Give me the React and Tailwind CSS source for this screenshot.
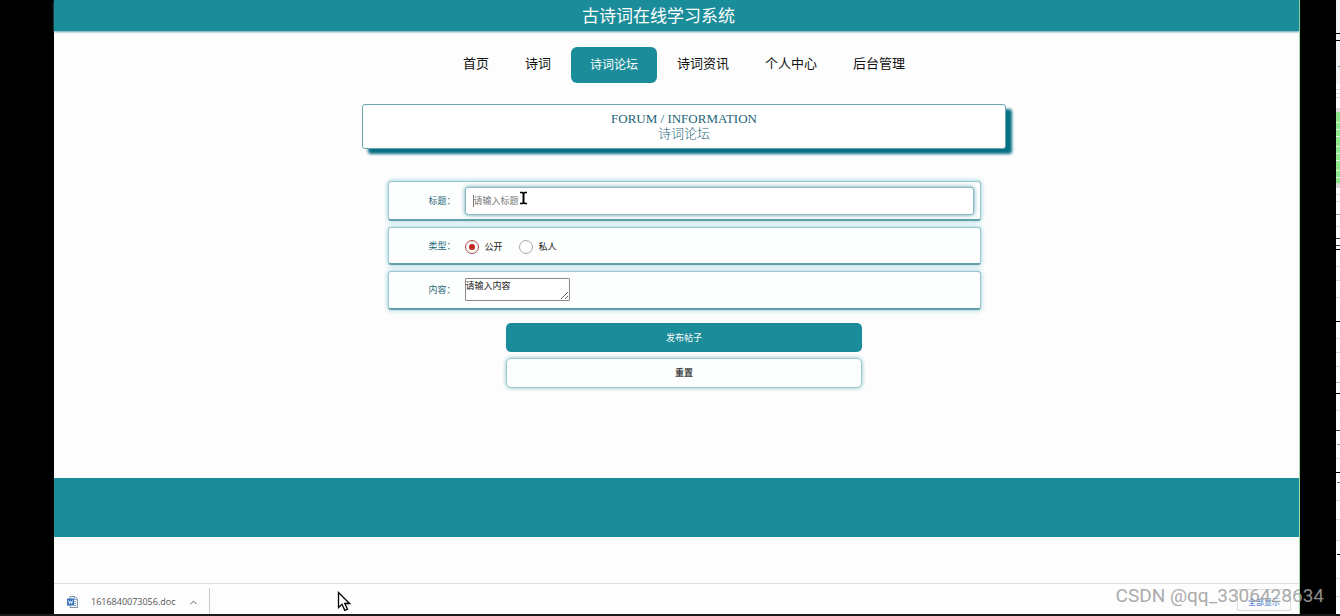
import React, { useState } from 'react'
import { ChevronUp } from 'lucide-react'

const navItems = ['首页', '诗词', '诗词论坛', '诗词资讯', '个人中心', '后台管理']

// [y, left, color] of each mark on the ruler
const rulerMarks = [
  [33, 0, '#000'], [40, 0, '#000'], [66, 2, '#7aa5a0'], [89, 0, '#ddd'], [93, 0, '#ddd'], [97, 0, '#ddd'],
  [194, 0, '#ddd'], [201, 0, '#ddd'], [214, 0, '#aaa'], [226, 0, '#ddd'], [238, 0, '#444'], [245, 0, '#444'],
  [249, 0, '#000'], [266, 0, '#ddd'], [280, 0, '#ddd'], [297, 0, '#ddd'], [321, 0, '#000'], [338, 0, '#ddd'],
  [352, 0, '#ddd'], [366, 0, '#ddd'], [382, 0, '#bbb'], [393, 0, '#000'], [410, 0, '#ddd'], [430, 0, '#444'],
  [444, 1, '#999'], [458, 0, '#ddd'], [472, 0, '#000'], [482, 1, '#777'], [500, 0, '#ddd'], [519, 0, '#ddd'],
  [540, 0, '#ddd'], [554, 1, '#000'], [578, 0, '#ddd'], [596, 0, '#ddd'],
]

function Ruler() {
  return (
    <svg className="w-1 shrink-0 bg-white" aria-hidden="true">
      <rect width="4" height="84" fill="#f1f2f6" />
      <rect y="108" width="4" height="80" fill="#ddd" />
      <rect y="112" width="4" height="71" fill="#90e58f" />
      {[122, 129, 136, 146, 153, 160, 170, 177].map((y) => (
        <rect key={y} y={y} width="4" height="1" fill="#e4f8e2" />
      ))}
      {rulerMarks.map(([y, x, color]) => (
        <rect key={y} x={x} y={y} width={4 - x} height="1" fill={color} />
      ))}
    </svg>
  )
}

function Header() {
  return (
    <header className="flex h-[31px] items-center justify-center bg-[#1b8c99] pr-9 pb-px shadow-[0_1px_2px_#5a9fae]">
      <h1 className="text-[17px] leading-5 text-white">古诗词在线学习系统</h1>
    </header>
  )
}

function Nav({ active, onSelect }) {
  return (
    <nav className="flex items-center justify-center pt-4 text-[13px] leading-5 text-[#111]">
      {navItems.map((item) => (
        <a
          key={item}
          href="#"
          onClick={(e) => {
            e.preventDefault()
            onSelect(item)
          }}
          className={
            item === active
              ? 'mx-0.5 rounded-md bg-[#1b8c99] px-[19px] pt-[7px] pb-[9px] text-xs leading-5 text-white'
              : 'px-[18px] pt-1.5 pb-2.5'
          }
        >
          {item}
        </a>
      ))}
    </nav>
  )
}

const rowClass =
  'flex items-center rounded-[3px] border border-b-2 border-[#9cc5cc] border-b-[#62a0a9] bg-[#fdfefe] pr-1.5 shadow-[0_0_5px_#8ccbd6]'
const labelClass = 'w-[76px] shrink-0 pl-10 text-[#1c6878]'

function Radio({ label, value, type, onChange }) {
  return (
    <label className="flex items-center gap-1.5">
      <input
        type="radio"
        name="type"
        checked={type === value}
        onChange={() => onChange(value)}
        className="size-3.5 appearance-none rounded-full border border-[#aaa] bg-white bg-clip-content p-[3px] checked:border-[#b34a40] checked:bg-[#c02717]"
      />
      {label}
    </label>
  )
}

function PostForm() {
  const [title, setTitle] = useState('')
  const [content, setContent] = useState('请输入内容')
  const [type, setType] = useState('public')

  const handleReset = () => {
    setTitle('')
    setContent('请输入内容')
    setType('public')
  }

  return (
    <form
      onSubmit={(e) => e.preventDefault()}
      className="mx-auto flex w-full max-w-[593px] flex-col gap-1.5 text-[9px] leading-3 text-[#222]"
    >
      <div className={`${rowClass} h-10`}>
        <label htmlFor="title" className={labelClass}>标题：</label>
        <div className="relative flex-1">
          <input
            id="title"
            type="text"
            value={title}
            onChange={(e) => setTitle(e.target.value)}
            placeholder="请输入标题"
            className="block h-7 w-full rounded-[3px] border border-[#8db9c2] bg-white px-2 outline-none placeholder:text-[#777] shadow-[0_0_4px_#5aa0ae]"
          />
          <span className="absolute top-2 left-2 h-3 w-px bg-[#777]" />
          {/* Text cursor */}
          <svg className="absolute top-1 left-[54px]" width="9" height="14" viewBox="0 0 9 14" fill="none" stroke="#000">
            <path d="M1 1.5h2.5l1 1 1-1H8M1 12.5h2.5l1-1 1 1H8" strokeWidth="1.5" />
            <path d="M4.5 2v10" strokeWidth="2" />
          </svg>
        </div>
      </div>
      <div className={`${rowClass} h-[38px]`}>
        <span className={labelClass}>类型：</span>
        <div className="flex gap-4 pt-0.5">
          <Radio label="公开" value="public" type={type} onChange={setType} />
          <Radio label="私人" value="private" type={type} onChange={setType} />
        </div>
      </div>
      <div className={`${rowClass} h-[39px]`}>
        <label htmlFor="content" className={labelClass}>内容：</label>
        <textarea
          id="content"
          value={content}
          onChange={(e) => setContent(e.target.value)}
          className="mb-0.5 h-[23px] w-[105px] resize overflow-hidden rounded-[1px] border border-[#888] bg-white pt-px"
        />
      </div>
      <div className="mx-auto flex w-3/5 flex-col gap-1.5 pt-[7px]">
        <button type="submit" className="h-[29px] rounded-[5px] bg-[#1b8c99] text-white">
          发布帖子
        </button>
        <button
          type="button"
          onClick={handleReset}
          className="h-[30px] rounded-[5px] border border-[#9dc6cd] bg-[#fdfefe] pb-px font-bold text-[#444] shadow-[0_0_4px_#8cc3cd]"
        >
          重置
        </button>
      </div>
    </form>
  )
}

function WordIcon() {
  return (
    <svg width="11" height="12" viewBox="0 0 11 12" aria-hidden="true">
      <path d="M3 .5h5L10.500 3v8.500H3z" fill="#f4f8fc" stroke="#8294aa" />
      <path d="M7.500 .5v3h3M7 5.500h2M7 7.500h2M7 9.500h2" fill="none" stroke="#8ba7c9" />
      <rect y="2.500" width="7" height="7" fill="#3b76be" />
      <path d="M1.500 4.500l1 3 1-2.500 1 2.500 1-3" fill="none" stroke="#fff" strokeWidth=".9" />
    </svg>
  )
}

function DownloadBar() {
  return (
    <div className="mt-auto flex h-[31px] justify-between border-t border-[#ddd] bg-[#fdfdfd] pt-1">
      <div className="flex items-center border-r border-[#ccc] pt-0.5 pr-2.5 pl-[13px] text-[9px] leading-3 text-[#555]">
        <WordIcon />
        <span className="pr-3 pl-[13px] font-['Open_Sans','Noto_Sans_CJK_SC',sans-serif]">1616840073056.doc</span>
        <button type="button" aria-label="更多">
          <ChevronUp className="size-[11px]" strokeWidth={2} />
        </button>
      </div>
      <button
        type="button"
        className="mr-2 mb-[3px] self-end rounded-[2px] border border-[#ddd] px-2.5 pt-1.5 pb-0.5 text-[8px] leading-3 text-[#3a6fc4]"
      >
        全部显示
      </button>
    </div>
  )
}

function App() {
  const [active, setActive] = useState('诗词论坛')

  return (
    <div className="relative flex min-h-screen flex-col bg-[#1c1a1c] font-['Noto_Sans_CJK_SC',sans-serif]">
      <div className="flex flex-1 bg-black">
        <div className="w-[54px] shrink-0" />
        <div className="flex min-w-0 flex-1 flex-col border-r border-[#9fe0a0] bg-[#fdfdfd]">
          <Header />
          <main className="pb-[90px] pl-[15px]">
            <Nav active={active} onSelect={setActive} />
            <section className="mx-auto mt-[21px] mb-8 w-full max-w-[644px] rounded-[3px] border border-[#6ba5ae] bg-white pt-1.5 pb-[7px] text-center font-['Liberation_Serif','Noto_Sans_CJK_SC',serif] text-[13px] leading-[15px] text-[#1c6478] shadow-[6px_5px_3px_#056f84]">
              <p>FORUM / INFORMATION</p>
              <h2 className="font-light">诗词论坛</h2>
            </section>
            <PostForm />
          </main>
          <footer className="h-[59px] bg-[#1b8c99]" />
          <DownloadBar />
        </div>
        <div className="w-9 shrink-0" />
        <Ruler />
      </div>
      <div className="h-0.5" />

      {/* Mouse pointer */}
      <svg className="absolute bottom-1 left-[337px]" width="14" height="21" viewBox="0 0 14 21" aria-hidden="true">
        <path d="M1.500 1.500v15l3.500-3.200 2.800 6 2.700-1.200-2.700-5.600h4.700z" fill="#fff" stroke="#000" strokeWidth="1.300" />
      </svg>
      {/* Watermark */}
      <span className="absolute right-4 bottom-2 font-[Roboto,sans-serif] text-[19px] leading-6 text-[#a0a0a0]/90">
        CSDN @qq_3306428634
      </span>
    </div>
  )
}

export default App
